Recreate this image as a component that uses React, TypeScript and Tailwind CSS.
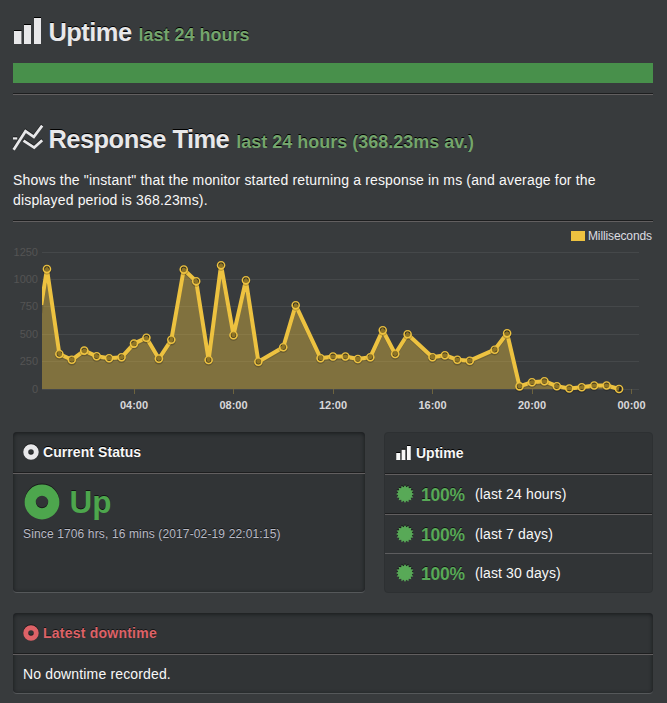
import type { ReactNode } from "react";

// Each sample is [half-hour index since midnight, vertical position on the plot].
const samples: [number, number][] = [
  [1, 269], [2, 354], [3, 359.8], [4, 350.6], [5, 356.3], [6, 358.2], [7, 357.3],
  [8, 343.6], [9, 337.7], [10, 358.8], [11, 339.8], [12, 269.5], [13, 281.2],
  [14, 360], [15, 265.2], [16, 335.2], [17, 280.2], [18, 361.7], [20, 347.2],
  [21, 305.2], [23, 358.2], [24, 356.5], [25, 356.5], [26, 359], [27, 357.2],
  [28, 330.2], [29, 354], [30, 334.2], [32, 357.2], [33, 355.2], [34, 359.8],
  [35, 360.7], [37, 349.7], [38, 333.3], [39, 386.4], [40, 382.2], [41, 381.2],
  [42, 386.2], [43, 388.5], [44, 387.3], [45, 385.5], [46, 385.5], [47, 389],
];

const xAt = (k: number) => 34.5 + k * 12.437;
const line = samples.map(([k, y]) => `${xAt(k).toFixed(2)},${y}`).join(" ");

const yTicks = [
  { label: "1250", y: 252.5 },
  { label: "1000", y: 279.5 },
  { label: "750", y: 306.5 },
  { label: "500", y: 334.5 },
  { label: "250", y: 361.5 },
  { label: "0", y: 389.5 },
];

const xTicks = ["04:00", "08:00", "12:00", "16:00", "20:00", "00:00"];

function Bars({ className }: { className: string }) {
  return (
    <svg className={className} viewBox="0 0 27 26" fill="currentColor">
      <path d="M0 13h7.5v13H0zM10 7h7v19h-7zM20 0h7v26h-7z" />
    </svg>
  );
}

function Trend() {
  return (
    <svg className="mb-[2px] h-[26px] w-[30px] shrink-0 overflow-visible drop-shadow-[0_-1px_0_rgba(0,0,0,0.5)]" viewBox="0 0 30 26" fill="none" stroke="currentColor" strokeWidth="2.7">
      <path d="M0.6 24.8 12.5 6.2 20.8 11.8 29.2 0.6" />
      <path d="M10.5 15.6 21.2 22.6 29.2 15.2" />
      <path d="M0 13.4h4.2" strokeWidth="2.2" />
    </svg>
  );
}

function Donut({ className }: { className: string }) {
  return (
    <svg className={className} viewBox="0 0 36 36" fill="none">
      <circle cx="18" cy="18" r="11.8" stroke="currentColor" strokeWidth="11.2" />
    </svg>
  );
}

const burstPoints = Array.from({ length: 32 }, (_, i) => {
  const r = i % 2 ? 6.9 : 9;
  const a = (i * Math.PI) / 16;
  return `${(9 + r * Math.sin(a)).toFixed(2)},${(9 - r * Math.cos(a)).toFixed(2)}`;
}).join(" ");

function Burst() {
  return (
    <svg className="h-[18px] w-[18px] shrink-0 drop-shadow-[0_-1px_0_rgba(0,0,0,0.5)]" viewBox="0 0 18 18" fill="currentColor">
      <polygon points={burstPoints} />
    </svg>
  );
}

function Rule() {
  return <div className="h-[2px] border-t border-b border-t-[#1d1e1f] border-b-[#625f60]" />;
}

function Heading({ icon, title, note }: { icon: ReactNode; title: string; note: string }) {
  return (
    <h2 className="flex h-10 items-center whitespace-nowrap text-[25.5px] font-bold text-[#e8e8ea] [text-shadow:0_-1px_0_#000]">
      <span className="flex w-[35.5px] shrink-0">{icon}</span>
      <span className="flex items-baseline gap-[7px] pt-[3px]">
        <span className="tracking-[-0.56px]">{title}</span>
        <small className="text-[18px] text-[#74a56c]">{note}</small>
      </span>
    </h2>
  );
}

function Chart() {
  return (
    <svg className="block h-[198px] w-[640px]" viewBox="13 222 640 198">
      <defs>
        <clipPath id="plot">
          <rect x="42" y="245" width="600" height="155" />
        </clipPath>
      </defs>
      <rect x="571" y="231" width="14" height="10" fill="#edc240" />
      <text x="588" y="240" fontSize="12" fill="#dcdce0" textLength="64">Milliseconds</text>
      {yTicks.map((t) => (
        <g key={t.label}>
          <path d={`M42 ${t.y}H639`} stroke="#45484a" />
          <text x="38" y={t.y + 3.5} fontSize="11" textAnchor="end" fill="#545454">{t.label}</text>
        </g>
      ))}
      {xTicks.map((t, i) => (
        <g key={t}>
          <path d={`M${Math.floor(134 + i * 99.5) + 0.5} 389V394`} stroke="#6d633e" />
          <text x={134 + i * 99.5} y="409" fontSize="11" fontWeight="700" textAnchor="middle" fill="#d8d8da">{t}</text>
        </g>
      ))}
      <g clipPath="url(#plot)">
        <polygon points={`42,389 42,304 ${line} 619,389`} fill="#edc240" fillOpacity="0.4" />
        <polyline points={`41,311 ${line}`} transform="translate(0 2)" fill="none" stroke="#000" strokeOpacity="0.12" strokeWidth="3" strokeLinejoin="round" />
        <polyline points={`41.3,305 ${line}`} fill="none" stroke="#edc240" strokeWidth="4" strokeLinejoin="round" />
      </g>
      {samples.map(([k, y]) => (
        <g key={k} fill="none">
          <path d={`M${xAt(k) - 4} ${y + 1}a4 4 0 0 0 8 0`} stroke="#000" strokeOpacity="0.2" strokeWidth="1.5" />
          <circle cx={xAt(k)} cy={y} r="3.5" fill="#000" fillOpacity="0.4" stroke="#edc240" strokeWidth="1.6" />
          <path d={`M${xAt(k) - 2.5} ${y - 0.5}a2.5 2.5 0 0 1 5 0`} stroke="#000" strokeOpacity="0.2" />
        </g>
      ))}
    </svg>
  );
}

function UptimeRow({ label }: { label: string }) {
  return (
    <div className="flex h-full items-center pl-[11px]">
      <span className="flex items-center text-[#58a957]">
        <Burst />
        <b className="ml-[7px] w-[54px] pt-px text-[17.5px] tracking-[-0.2px] [text-shadow:0_-1px_0_rgba(0,0,0,0.6)]">100%</b>
      </span>
      <span className="tracking-[0.13px]">{label}</span>
    </div>
  );
}

export default function App() {
  return (
    <main className="h-[703px] w-[667px] overflow-hidden bg-[#383b3d] px-[13px] pt-3 font-['Liberation_Sans',Arial,sans-serif] text-[14px] leading-5 text-[#f8f8f8]">
      <Heading icon={<Bars className="mb-[2px] ml-px h-[26px] w-[27px] drop-shadow-[0_-1px_0_#000]" />} title="Uptime" note="last 24 hours" />
      <div className="mt-[11px] mb-[10px] h-5 w-[640px] bg-[#48904b]" />
      <div className="w-[640px]"><Rule /></div>

      <section className="mt-6 w-[640px]">
        <Heading icon={<Trend />} title="Response Time" note="last 24 hours (368.23ms av.)" />
        <p className="mt-[11px] mb-[10px] w-[620px] tracking-[0.16px]">
          Shows the "instant" that the monitor started returning a response in ms (and average for the displayed period is 368.23ms).
        </p>
        <Rule />
        <Chart />
      </section>

      <section className="mt-3 flex w-[640px] justify-between">
        <div className="h-[161px] w-[352px] rounded border-b border-[#55585a] bg-[#313436] shadow-[inset_0_1px_4px_#17191b]">
          <h3 className="flex h-10 items-center gap-1 pl-[10px] font-bold tracking-[0.07px] [text-shadow:0_-1px_0_#000]">
            <Donut className="h-4 w-4 text-[#e8e8ea] drop-shadow-[0_-1px_0_rgba(0,0,0,0.5)]" />
            Current Status
          </h3>
          <Rule />
          <div className="flex h-10 items-center gap-[10px] pt-[16px] pl-[10.5px] text-[31.5px] font-bold text-[#4da64d] [text-shadow:0_-1px_0_rgba(0,0,0,0.6)]">
            <Donut className="h-[36px] w-[36px] drop-shadow-[0_-1px_0_rgba(0,0,0,0.5)]" />
            Up
          </div>
          <p className="mt-[10px] pl-[10px] text-[12px] tracking-[0.135px] text-[#b9bac6] [text-shadow:0_-1px_0_rgba(0,0,0,0.6)]">Since 1706 hrs, 16 mins (2017-02-19 22:01:15)</p>
        </div>
        <div className="flex h-[161px] w-[269px] flex-col rounded border border-[#2d3032] bg-[#313436]">
          <h3 className="flex h-10 shrink-0 items-center gap-[5px] pl-[11px] font-bold [text-shadow:0_-1px_0_#000]">
            <Bars className="h-[14px] w-[15px] drop-shadow-[0_-1px_0_#000]" />
            Uptime
          </h3>
          <Rule />
          <div className="h-[38px]"><UptimeRow label="(last 24 hours)" /></div>
          <Rule />
          <div className="h-[38px]"><UptimeRow label="(last 7 days)" /></div>
          <div className="h-px bg-[#5d5d5f]" />
          <div className="h-[38px]"><UptimeRow label="(last 30 days)" /></div>
        </div>
      </section>

      <section className="mt-5 h-[81px] w-[640px] rounded border-b border-[#55585a] bg-[#313436] shadow-[inset_0_1px_4px_#17191b]">
        <h3 className="flex h-10 items-center gap-1 pl-[10px] font-bold tracking-[0.23px] text-[#dd6267] [text-shadow:0_-1px_0_rgba(0,0,0,0.6)]">
          <Donut className="h-4 w-4 drop-shadow-[0_-1px_0_rgba(0,0,0,0.5)]" />
          Latest downtime
        </h3>
        <Rule />
        <p className="pt-[9px] pl-[10px] tracking-[0.15px]">No downtime recorded.</p>
      </section>
    </main>
  );
}
